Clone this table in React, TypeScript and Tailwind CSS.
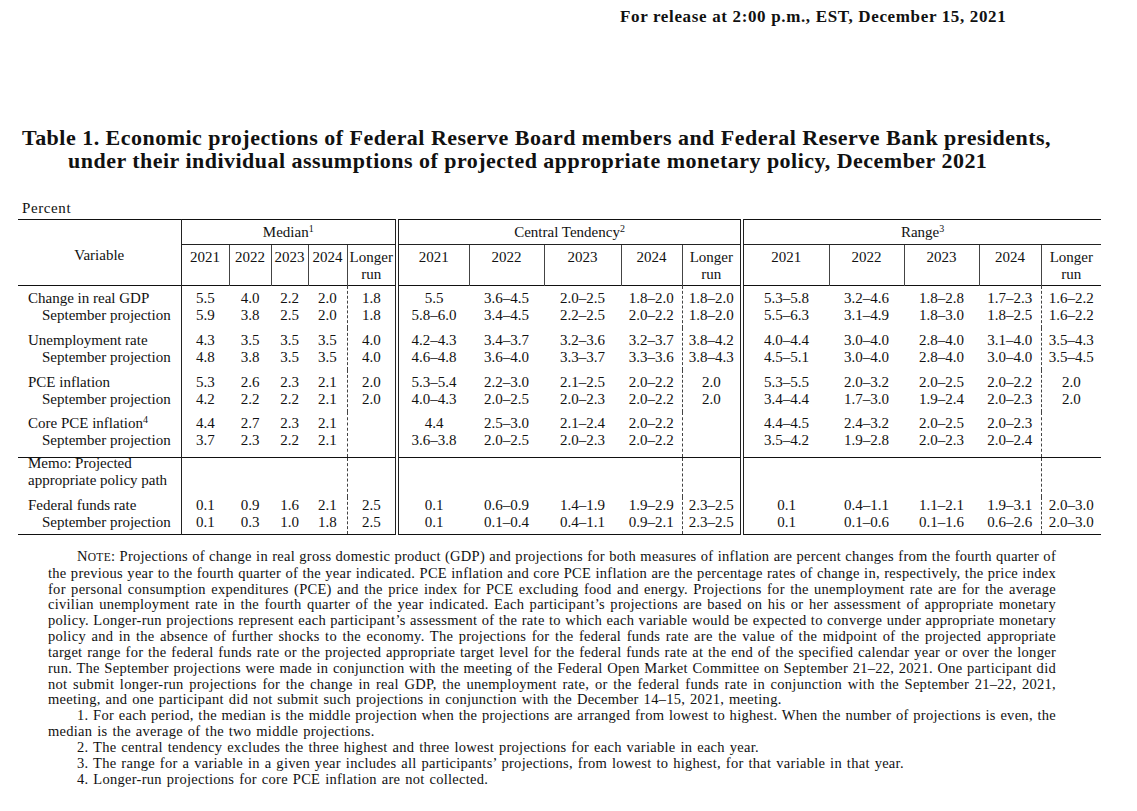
import React from 'react';

type Group = {
  label: React.ReactNode;
  rows: string[][];
  pad: string;
};

const colWidths = [
  'w-[163px]',
  'w-[48px]',
  'w-[42px]',
  'w-[37px]',
  'w-[39px]',
  'w-[50px]',
  'w-[72px]',
  'w-[75px]',
  'w-[77px]',
  'w-[61px]',
  'w-[60px]',
  'w-[87px]',
  'w-[75px]',
  'w-[75px]',
  'w-[62px]',
  'w-[60px]'
];

// left borders of the 15 data columns, body rows
const bodyBorder = [
  'border-l border-solid border-[#222]',
  '',
  '',
  '',
  'border-l border-dashed border-[#444]',
  'border-l-4 border-double border-[#222]',
  '',
  '',
  '',
  'border-l border-dashed border-[#444]',
  'border-l-4 border-double border-[#222]',
  '',
  '',
  '',
  'border-l border-dashed border-[#444]'
];

// left borders of the 15 data columns, second header row
const headBorder = [
  'border-l border-solid border-[#222]',
  'border-l border-solid border-[#444]',
  'border-l border-solid border-[#444]',
  'border-l border-solid border-[#444]',
  'border-l border-solid border-[#444]',
  'border-l-4 border-double border-[#222]',
  'border-l border-solid border-[#444]',
  'border-l border-solid border-[#444]',
  'border-l border-solid border-[#444]',
  'border-l border-solid border-[#444]',
  'border-l-4 border-double border-[#222]',
  'border-l border-solid border-[#444]',
  'border-l border-solid border-[#444]',
  'border-l border-solid border-[#444]',
  'border-l border-solid border-[#444]'
];

const years = ['2021', '2022', '2023', '2024'];

const r = (s: string) => s.split(' ').map((v) => (v === '-' ? '' : v));

const groups: Group[] = [
  {
    label: 'Change in real GDP',
    pad: 'pt-1 pb-1',
    rows: [
      r('5.5 4.0 2.2 2.0 1.8 5.5 3.6–4.5 2.0–2.5 1.8–2.0 1.8–2.0 5.3–5.8 3.2–4.6 1.8–2.8 1.7–2.3 1.6–2.2'),
      r('5.9 3.8 2.5 2.0 1.8 5.8–6.0 3.4–4.5 2.2–2.5 2.0–2.2 1.8–2.0 5.5–6.3 3.1–4.9 1.8–3.0 1.8–2.5 1.6–2.2')
    ]
  },
  {
    label: 'Unemployment rate',
    pad: 'pt-1 pb-1',
    rows: [
      r('4.3 3.5 3.5 3.5 4.0 4.2–4.3 3.4–3.7 3.2–3.6 3.2–3.7 3.8–4.2 4.0–4.4 3.0–4.0 2.8–4.0 3.1–4.0 3.5–4.3'),
      r('4.8 3.8 3.5 3.5 4.0 4.6–4.8 3.6–4.0 3.3–3.7 3.3–3.6 3.8–4.3 4.5–5.1 3.0–4.0 2.8–4.0 3.0–4.0 3.5–4.5')
    ]
  },
  {
    label: 'PCE inflation',
    pad: 'pt-1 pb-1',
    rows: [
      r('5.3 2.6 2.3 2.1 2.0 5.3–5.4 2.2–3.0 2.1–2.5 2.0–2.2 2.0 5.3–5.5 2.0–3.2 2.0–2.5 2.0–2.2 2.0'),
      r('4.2 2.2 2.2 2.1 2.0 4.0–4.3 2.0–2.5 2.0–2.3 2.0–2.2 2.0 3.4–4.4 1.7–3.0 1.9–2.4 2.0–2.3 2.0')
    ]
  },
  {
    label: (
      <>
        Core PCE inflation<sup className="text-[10px]">4</sup>
      </>
    ),
    pad: 'pt-[3px] pb-[8px]',
    rows: [
      r('4.4 2.7 2.3 2.1 - 4.4 2.5–3.0 2.1–2.4 2.0–2.2 - 4.4–4.5 2.4–3.2 2.0–2.5 2.0–2.3 -'),
      r('3.7 2.3 2.2 2.1 - 3.6–3.8 2.0–2.5 2.0–2.3 2.0–2.2 - 3.5–4.2 1.9–2.8 2.0–2.3 2.0–2.4 -')
    ]
  }
];

const ffr: Group = {
  label: 'Federal funds rate',
  pad: 'pt-0 pb-[3px]',
  rows: [
    r('0.1 0.9 1.6 2.1 2.5 0.1 0.6–0.9 1.4–1.9 1.9–2.9 2.3–2.5 0.1 0.4–1.1 1.1–2.1 1.9–3.1 2.0–3.0'),
    r('0.1 0.3 1.0 1.8 2.5 0.1 0.1–0.4 0.4–1.1 0.9–2.1 2.3–2.5 0.1 0.1–0.6 0.1–1.6 0.6–2.6 2.0–3.0')
  ]
};

const GroupRow = ({ g }: { g: Group }) => (
  <tr>
    <td className={`${g.pad} pl-[10px] align-top whitespace-nowrap`}>
      <div>{g.label}</div>
      <div className="pl-[14px]">September projection</div>
    </td>
    {bodyBorder.map((b, i) => (
      <td key={i} className={`${g.pad} ${b} text-center align-top whitespace-nowrap`}>
        <div className="h-[17px]">{g.rows[0][i]}</div>
        <div className="h-[17px]">{g.rows[1][i]}</div>
      </td>
    ))}
  </tr>
);

const Line = ({
  children,
  indent,
  last
}: {
  children: React.ReactNode;
  indent?: boolean;
  last?: boolean;
}) => (
  <div
    className={`${indent ? 'pl-[29px]' : ''} ${
      last ? 'text-left [word-spacing:1px]' : 'text-justify [text-align-last:justify]'
    } whitespace-nowrap`}
  >
    {children}
  </div>
);

export default function App() {
  return (
    <div className="h-[811px] w-[1137px] overflow-hidden bg-white font-['Liberation_Serif',serif] text-[#111]">
      <div className="ml-[620px] pt-[8px] text-[17px] leading-[18px] font-bold tracking-[0.65px] whitespace-nowrap">
        For release at 2:00 p.m., EST, December 15, 2021
      </div>

      <div className="mt-[100px] text-[22px] leading-[23px] font-bold tracking-[0.48px]">
        <div className="ml-[22px] whitespace-nowrap">
          Table 1. Economic projections of Federal Reserve Board members and Federal Reserve Bank presidents,
        </div>
        <div className="ml-[68px] whitespace-nowrap">
          under their individual assumptions of projected appropriate monetary policy, December 2021
        </div>
      </div>

      <div className="mt-[28px] ml-[22px] text-[15px] leading-[17px] tracking-[0.6px]">Percent</div>

      <table className="mt-[2px] ml-[18px] w-[1083px] table-fixed border-collapse text-[15px] leading-[17px]">
        <colgroup>
          {colWidths.map((w, i) => (
            <col key={i} className={w} />
          ))}
        </colgroup>
        <thead>
          <tr className="h-[25px] border-t border-[#111]">
            <th rowSpan={2} className="pt-[6px] align-middle font-normal">
              Variable
            </th>
            <th colSpan={5} className="border-b border-l border-solid border-[#222] font-normal">
              Median<sup className="text-[10px]">1</sup>
            </th>
            <th colSpan={5} className="border-b border-l-4 border-double border-[#222] font-normal">
              Central Tendency<sup className="text-[10px]">2</sup>
            </th>
            <th colSpan={5} className="border-b border-l-4 border-double border-[#222] font-normal">
              Range<sup className="text-[10px]">3</sup>
            </th>
          </tr>
          <tr className="h-[41px] border-b border-[#111]">
            {headBorder.map((b, i) => (
              <th key={i} className={`${b} pt-[4px] align-top font-normal`}>
                {i % 5 === 4 ? (
                  <>
                    <div>Longer</div>
                    <div>run</div>
                  </>
                ) : (
                  years[i % 5]
                )}
              </th>
            ))}
          </tr>
        </thead>
        <tbody>
          {groups.map((g, i) => (
            <GroupRow key={i} g={g} />
          ))}
          <tr className="border-t border-[#111]">
            <td className="pb-[8px] pl-[10px] align-top whitespace-nowrap">
              <div className="-mt-[3px]">
                <div>Memo: Projected</div>
                <div>appropriate policy path</div>
              </div>
            </td>
            {bodyBorder.map((b, i) => (
              <td key={i} className={b} />
            ))}
          </tr>
          <GroupRow g={ffr} />
          <tr className="border-t border-[#111]">
            <td colSpan={16} className="h-0 p-0" />
          </tr>
        </tbody>
      </table>

      <div className="mt-[14px] ml-[48px] w-[1008px] text-[14.5px] leading-[15.83px] tracking-[0.28px]">
        <Line indent>
          N<span className="text-[11.5px]">OTE</span>: Projections of change in real gross domestic product (GDP) and projections for both measures of inflation are percent changes from the fourth quarter of
        </Line>
        <Line>
          the previous year to the fourth quarter of the year indicated. PCE inflation and core PCE inflation are the percentage rates of change in, respectively, the price index
        </Line>
        <Line>
          for personal consumption expenditures (PCE) and the price index for PCE excluding food and energy. Projections for the unemployment rate are for the average
        </Line>
        <Line>
          civilian unemployment rate in the fourth quarter of the year indicated. Each participant’s projections are based on his or her assessment of appropriate monetary
        </Line>
        <Line>
          policy. Longer-run projections represent each participant’s assessment of the rate to which each variable would be expected to converge under appropriate monetary
        </Line>
        <Line>
          policy and in the absence of further shocks to the economy. The projections for the federal funds rate are the value of the midpoint of the projected appropriate
        </Line>
        <Line>
          target range for the federal funds rate or the projected appropriate target level for the federal funds rate at the end of the specified calendar year or over the longer
        </Line>
        <Line>
          run. The September projections were made in conjunction with the meeting of the Federal Open Market Committee on September 21–22, 2021. One participant did
        </Line>
        <Line>
          not submit longer-run projections for the change in real GDP, the unemployment rate, or the federal funds rate in conjunction with the September 21–22, 2021,
        </Line>
        <Line last>
          meeting, and one participant did not submit such projections in conjunction with the December 14–15, 2021, meeting.
        </Line>
        <Line indent>
          1. For each period, the median is the middle projection when the projections are arranged from lowest to highest. When the number of projections is even, the
        </Line>
        <Line last>median is the average of the two middle projections.</Line>
        <Line indent last>
          2. The central tendency excludes the three highest and three lowest projections for each variable in each year.
        </Line>
        <Line indent last>
          3. The range for a variable in a given year includes all participants’ projections, from lowest to highest, for that variable in that year.
        </Line>
        <Line indent last>
          4. Longer-run projections for core PCE inflation are not collected.
        </Line>
      </div>
    </div>
  );
}
